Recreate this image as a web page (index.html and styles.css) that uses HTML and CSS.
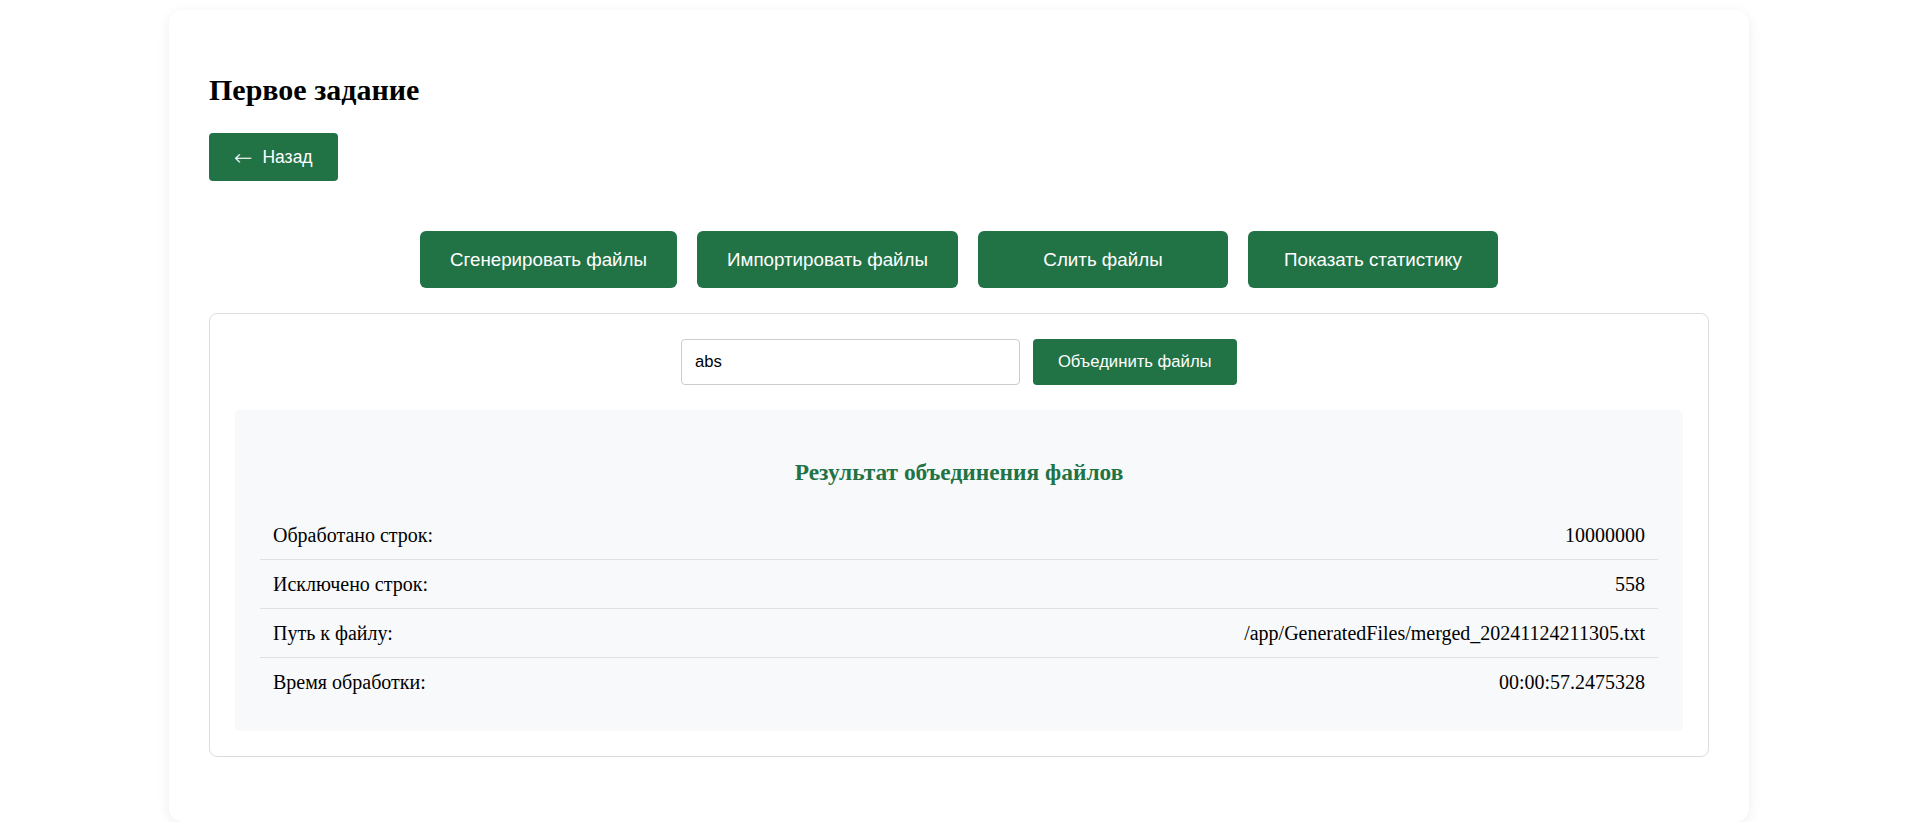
FILE: index.html
```html
<!DOCTYPE html>
<html lang="ru">
<head>
<meta charset="utf-8">
<title>Первое задание</title>
<link rel="stylesheet" href="styles.css">
</head>
<body>
<div class="card">
  <h1 class="title">Первое задание</h1>
  <button class="back-btn"><span class="arrow">←</span>Назад</button>
  <div class="actions">
    <button class="action-btn">Сгенерировать файлы</button>
    <button class="action-btn">Импортировать файлы</button>
    <button class="action-btn">Слить файлы</button>
    <button class="action-btn">Показать статистику</button>
  </div>
  <div class="panel">
    <div class="merge-form">
      <input class="merge-input" type="text" value="abs">
      <button class="merge-btn">Объединить файлы</button>
    </div>
    <div class="result">
      <h3 class="result-title">Результат объединения файлов</h3>
      <div class="row"><span class="label">Обработано строк:</span><span class="value">10000000</span></div>
      <div class="row"><span class="label">Исключено строк:</span><span class="value">558</span></div>
      <div class="row"><span class="label">Путь к файлу:</span><span class="value">/app/GeneratedFiles/merged_20241124211305.txt</span></div>
      <div class="row"><span class="label">Время обработки:</span><span class="value">00:00:57.2475328</span></div>
    </div>
  </div>
</div>
</body>
</html>
```
FILE: styles.css
```css
html, body {
  margin: 0;
  padding: 0;
  background: #ffffff;
}
body {
  font-family: "Liberation Serif", "Times New Roman", serif;
  color: #000;
  padding-top: 10px;
}
.card {
  box-sizing: border-box;
  width: 1580px;
  margin-left: 169px;
  padding: 40px;
  background: #fff;
  border-radius: 14px;
  box-shadow: 0 3px 14px rgba(0, 0, 0, 0.07);
}
.title {
  font-size: 30px;
  font-weight: bold;
  margin: 22.5px 0 0;
  line-height: 34.5px;
}
.back-btn {
  margin-top: 25.5px;
  display: flex;
  align-items: center;
  height: 48px;
  background: #217346;
  color: #fff;
  border: none;
  border-radius: 4px;
  font-family: "Liberation Sans", Arial, sans-serif;
  font-size: 17.5px;
  padding: 0 25px 0 25px;
  line-height: 20px;
}
.arrow {
  font-family: "DejaVu Sans", sans-serif;
  font-size: 22px;
  font-weight: 200;
  line-height: 20px;
  margin-right: 10px;
  position: relative;
  top: 1px;
}
.actions {
  display: flex;
  justify-content: center;
  gap: 20px;
  margin-top: 50.5px;
}
.action-btn {
  min-width: 250px;
  height: 56.5px;
  background: #217346;
  color: #fff;
  border: none;
  border-radius: 6px;
  font-family: "Liberation Sans", Arial, sans-serif;
  font-size: 18.75px;
  line-height: 21.5px;
  padding: 0 30px;
}
.panel {
  margin-top: 25.5px;
  margin-bottom: 25px;
  border: 1px solid #dcdcdc;
  border-radius: 8px;
  padding: 25px;
}
.merge-form {
  display: flex;
  justify-content: center;
  gap: 12.5px;
}
.merge-input {
  box-sizing: border-box;
  width: 339px;
  height: 46px;
  border: 1px solid #cccccc;
  border-radius: 4px;
  padding: 0 12.5px;
  font-family: "Liberation Sans", Arial, sans-serif;
  font-size: 16.67px;
  color: #000;
  background: #fff;
}
.merge-btn {
  height: 46px;
  background: #217346;
  color: #fff;
  border: none;
  border-radius: 4px;
  font-family: "Liberation Sans", Arial, sans-serif;
  font-size: 16.67px;
  padding: 0 25px;
}
.result {
  margin-top: 25px;
  background: #f8f9fa;
  border-radius: 5px;
  padding: 25px 25px 25px;
}
.result-title {
  color: #217346;
  text-align: center;
  font-size: 23.4px;
  line-height: 27px;
  margin: 23.5px 0 25.5px;
}
.row {
  display: flex;
  justify-content: space-between;
  padding: 12.5px 13px;
  font-size: 20px;
  line-height: 23px;
  border-bottom: 1px solid #dee2e6;
}
.row:last-child {
  border-bottom: none;
}
```
